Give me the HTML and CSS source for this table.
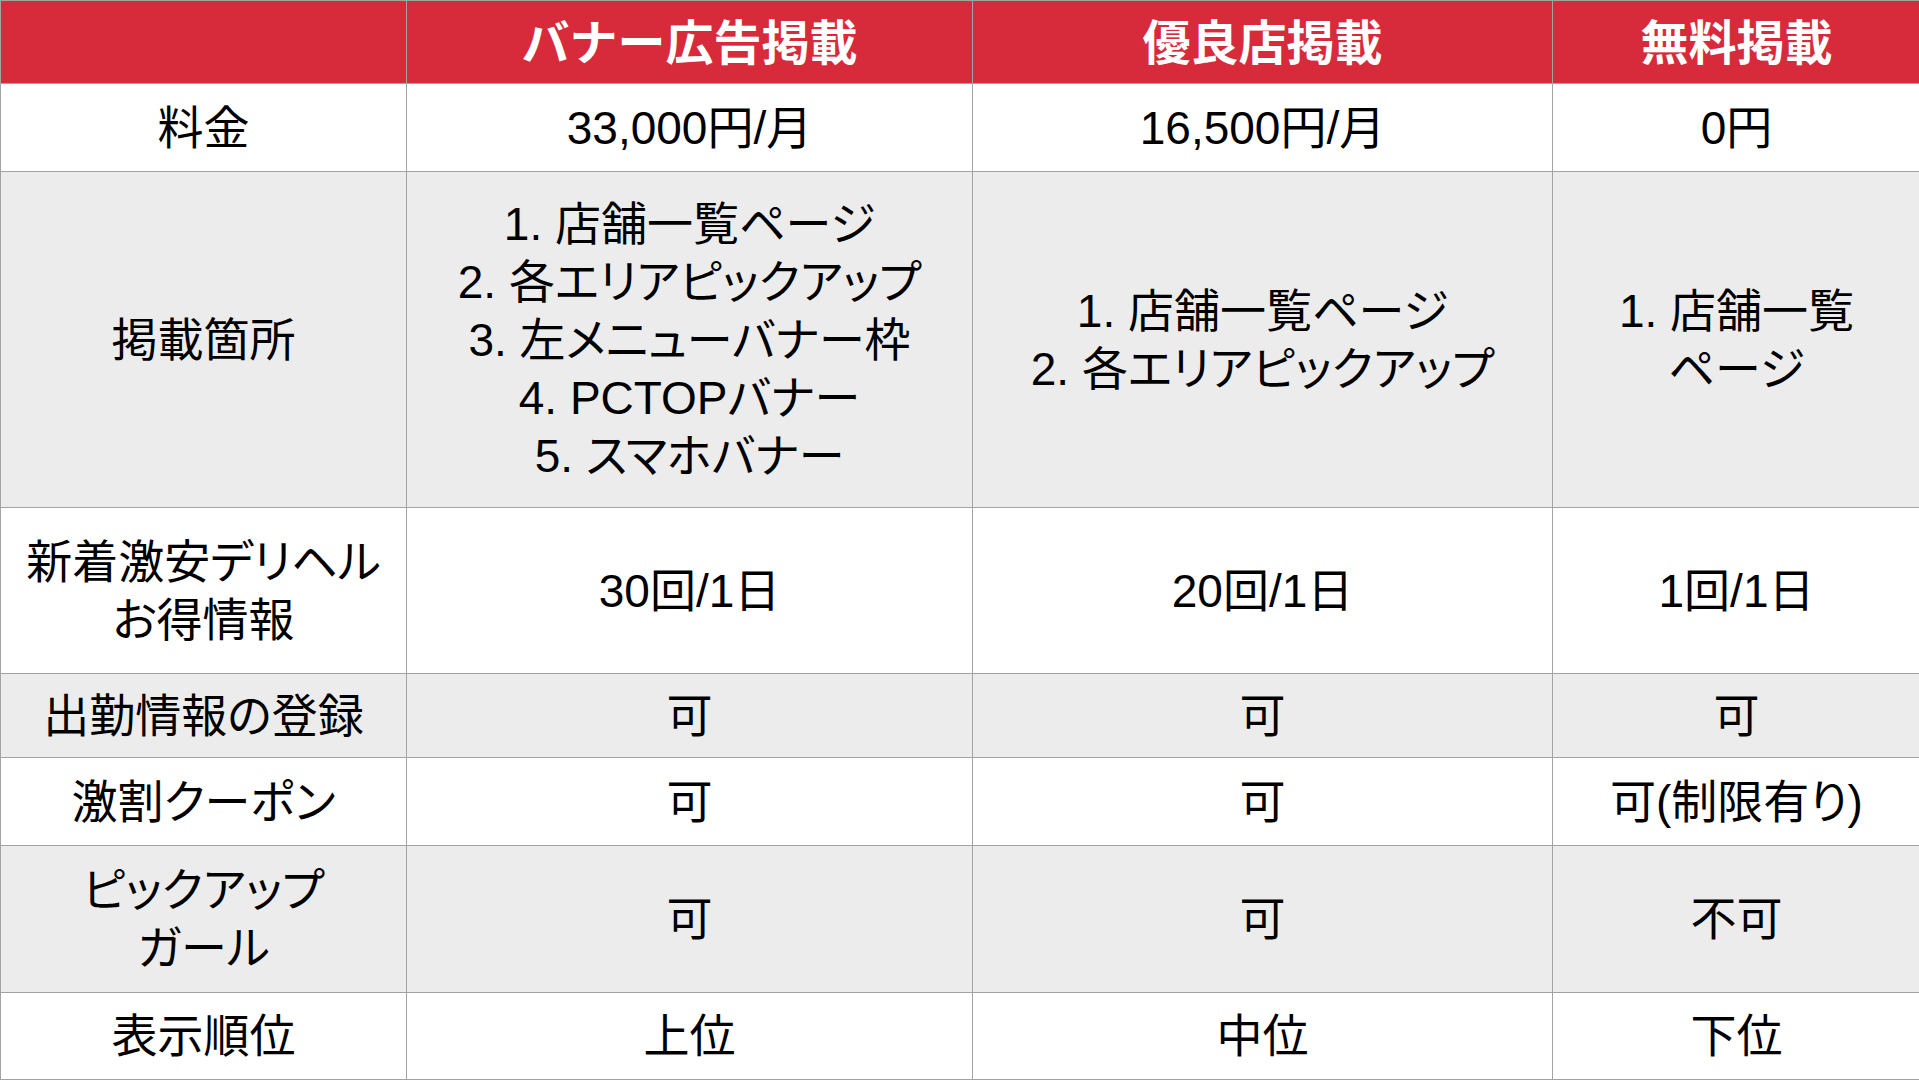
FILE: index.html
```html
<!DOCTYPE html>
<html lang="ja">
<head>
<meta charset="utf-8">
<title>掲載プラン比較</title>
<link rel="stylesheet" href="styles.css">
</head>
<body>
<div class="table">
  <div class="cell head"></div>
  <div class="cell head">バナー広告掲載</div>
  <div class="cell head">優良店掲載</div>
  <div class="cell head">無料掲載</div>

  <div class="cell">料金</div>
  <div class="cell">33,000円/月</div>
  <div class="cell">16,500円/月</div>
  <div class="cell">0円</div>

  <div class="cell gray">掲載箇所</div>
  <div class="cell gray">1. 店舗一覧ページ<br>2. 各エリアピックアップ<br>3. 左メニューバナー枠<br>4. PCTOPバナー<br>5. スマホバナー</div>
  <div class="cell gray">1. 店舗一覧ページ<br>2. 各エリアピックアップ</div>
  <div class="cell gray">1. 店舗一覧<br>ページ</div>

  <div class="cell">新着激安デリヘル<br>お得情報</div>
  <div class="cell">30回/1日</div>
  <div class="cell">20回/1日</div>
  <div class="cell">1回/1日</div>

  <div class="cell gray">出勤情報の登録</div>
  <div class="cell gray">可</div>
  <div class="cell gray">可</div>
  <div class="cell gray">可</div>

  <div class="cell">激割クーポン</div>
  <div class="cell">可</div>
  <div class="cell">可</div>
  <div class="cell">可(制限有り)</div>

  <div class="cell gray">ピックアップ<br>ガール</div>
  <div class="cell gray">可</div>
  <div class="cell gray">可</div>
  <div class="cell gray">不可</div>

  <div class="cell">表示順位</div>
  <div class="cell">上位</div>
  <div class="cell">中位</div>
  <div class="cell">下位</div>
</div>
</body>
</html>
```

FILE: styles.css
```css
html, body {
  margin: 0;
  padding: 0;
  background: #ffffff;
}

body {
  width: 1919px;
  height: 1080px;
  overflow: hidden;
  font-family: "Liberation Sans", Arial, "Noto Sans CJK JP", sans-serif;
}

.table {
  display: grid;
  grid-template-columns: 405px 565px 579px 367px;
  grid-template-rows: 82px 87px 335px 165px 83px 87px 146px 86px;
  gap: 1px;
  padding: 1px 0 1px 1px;
  background: #a3a3a3;
  width: 1919px;
  height: 1080px;
  box-sizing: border-box;
}

.cell {
  display: flex;
  align-items: center;
  justify-content: center;
  text-align: center;
  background: #ffffff;
  color: #000000;
  font-size: 46px;
  line-height: 58px;
  white-space: nowrap;
  font-feature-settings: "palt" 1;
}

.cell.gray {
  background: #ececec;
}

.cell.head {
  background: #d72a3a;
  color: #ffffff;
  font-weight: bold;
  font-size: 48px;
  padding-top: 4px;
  box-sizing: border-box;
  font-feature-settings: normal;
}
```
